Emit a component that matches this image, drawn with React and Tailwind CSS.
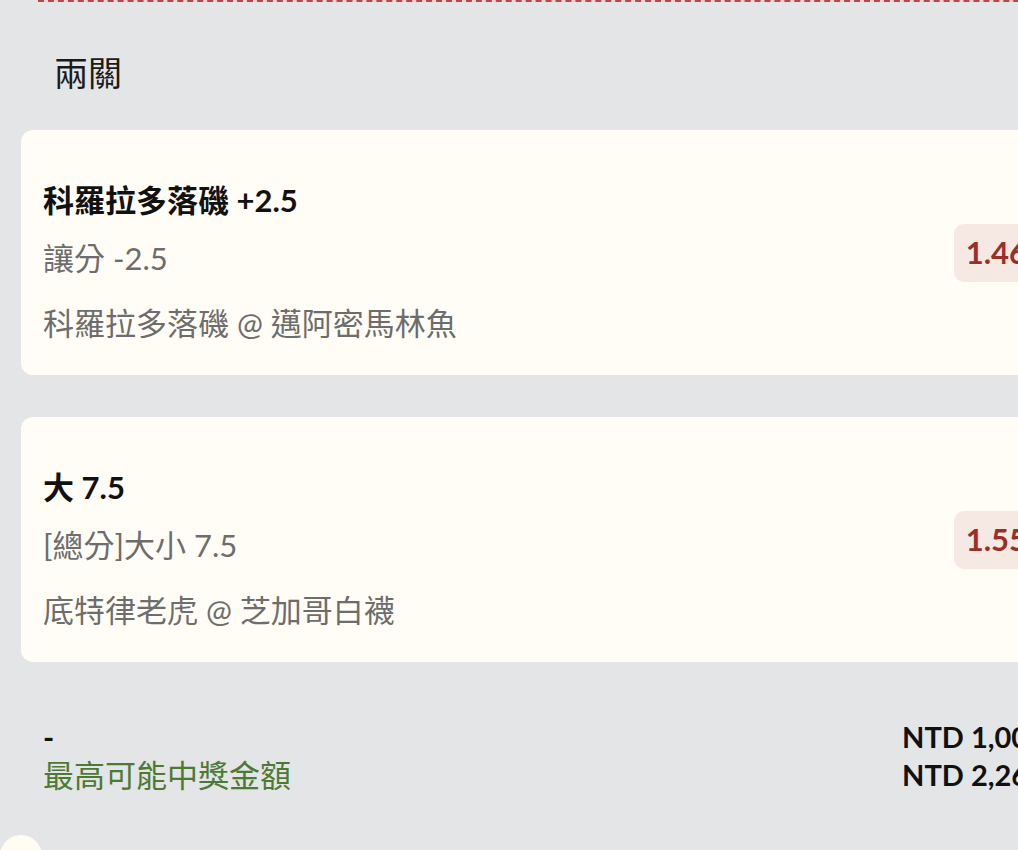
import React from 'react';

const legs = [
  { pick: '科羅拉多落磯 +2.5', market: '讓分 -2.5', game: '科羅拉多落磯 @ 邁阿密馬林魚', odds: '1.46' },
  { pick: '大 7.5', market: '[總分]大小 7.5', game: '底特律老虎 @ 芝加哥白襪', odds: '1.55' },
];

const LegCard = ({ leg }) => (
  <div className="flex items-center justify-between h-[245px] rounded-[12px] bg-[#fffdf6] pl-[22px] pr-[19px]">
    <div className="flex flex-col pt-[17px]">
      <div className="text-[31px] leading-[40px] font-bold text-[#111111]">{leg.pick}</div>
      <div className="mt-[18px] text-[31px] leading-[40px] text-[#6d6d6d]">{leg.market}</div>
      <div className="mt-[25px] text-[31px] leading-[40px] text-[#6d6d6d]">{leg.game}</div>
    </div>
    <div className="flex items-center h-[58px] rounded-[10px] bg-[#f6e8e2] px-[12px] text-[31px] font-bold text-[#9b2f27]">
      {leg.odds}
    </div>
  </div>
);

export default function App() {
  return (
    <div className="w-[1018px] h-[850px] overflow-hidden bg-[#e4e5e7] font-['Lato','Noto_Sans_CJK_TC',sans-serif]">
      <div className="w-[1079px]">
        <div className="ml-[38px] h-[2px] bg-[#f0d4d4] border-t-2 border-dashed border-[#b9474a]" />

        <h2 className="mt-[51px] ml-[54px] text-[34px] leading-[40px] text-[#1a1a1a]">兩關</h2>

        <div className="mt-[37px] px-[21px] flex flex-col gap-[42px]">
          {legs.map((leg) => (
            <LegCard key={leg.pick} leg={leg} />
          ))}
        </div>

        <div className="mt-[56px] pl-[43px] pr-[34px] flex justify-between">
          <div className="flex flex-col">
            <div className="text-[30px] leading-[38px] font-bold text-[#111111]">-</div>
            <div className="text-[31px] leading-[38px] text-[#4c7a35]">最高可能中獎金額</div>
          </div>
          <div className="flex flex-col items-end">
            <div className="text-[29px] leading-[38px] font-bold text-[#111111]">NTD 1,000</div>
            <div className="text-[29px] leading-[38px] font-bold text-[#111111]">NTD 2,263</div>
          </div>
        </div>

        <div className="mt-[41px] w-[42px] h-[42px] rounded-full bg-[#fffdf2]" />
      </div>
    </div>
  );
}
